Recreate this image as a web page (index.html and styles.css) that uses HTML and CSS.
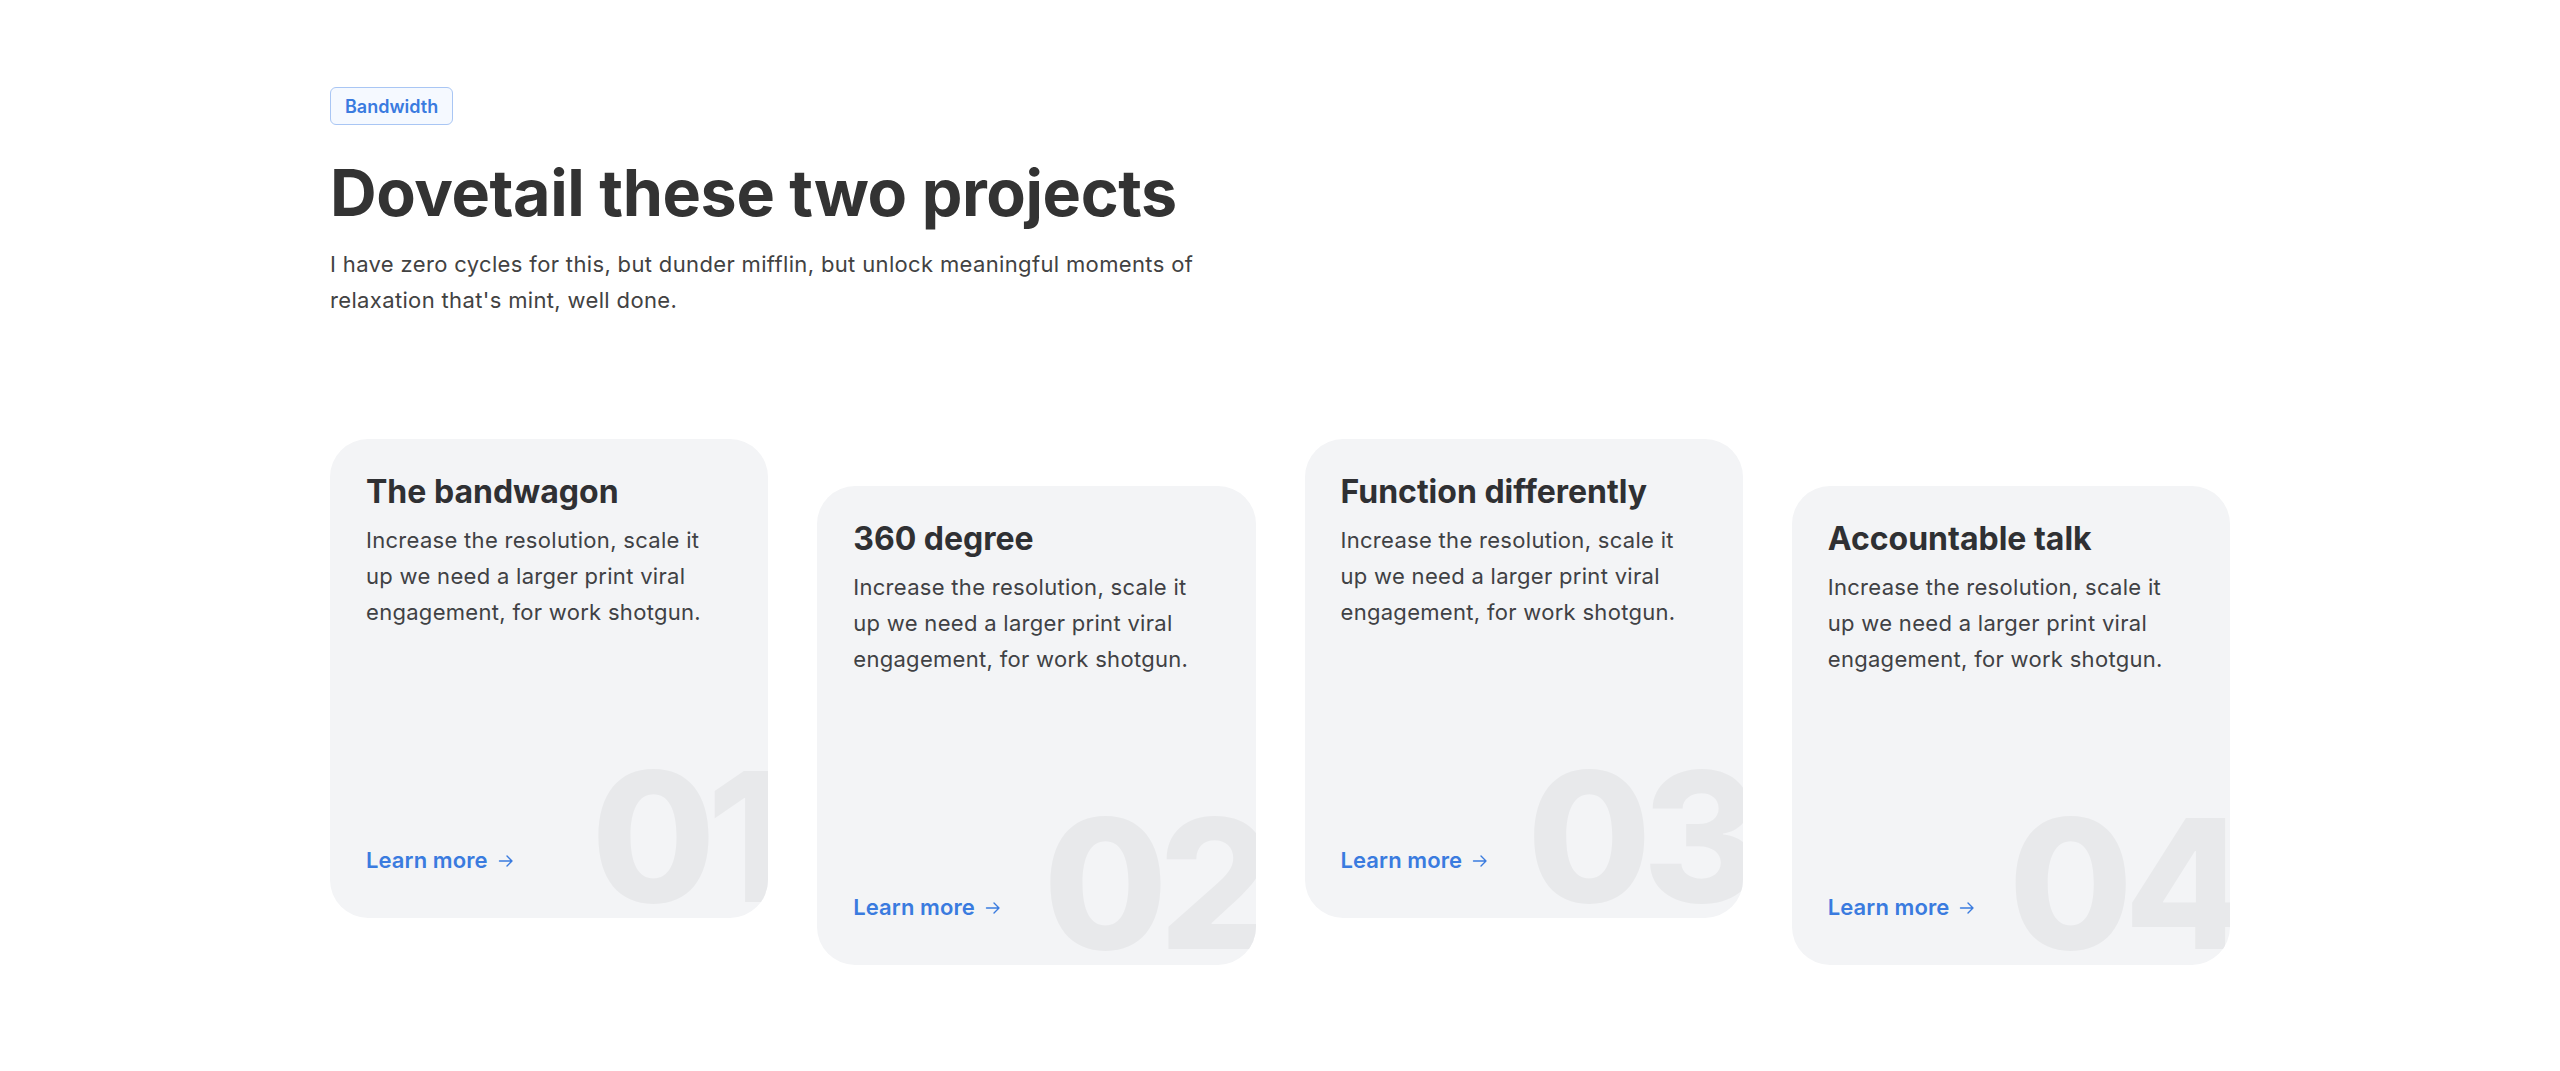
FILE: index.html
```html
<!DOCTYPE html>
<html lang="en">
<head>
<meta charset="utf-8">
<title>Dovetail these two projects</title>
<link rel="stylesheet" href="styles.css">
</head>
<body>
<section class="features">
  <header class="intro">
    <span class="badge">Bandwidth</span>
    <h1 class="headline">Dovetail these two projects</h1>
    <p class="lead">I have zero cycles for this, but dunder mifflin, but unlock meaningful moments of relaxation that's mint, well done.</p>
  </header>
  <div class="cards">
    <article class="card">
      <h2 class="card-title">The bandwagon</h2>
      <p class="card-text">Increase the resolution, scale it up we need a larger print viral engagement, for work shotgun.</p>
      <a class="card-link" href="#">Learn more <svg class="arrow" viewBox="0 0 18 18" width="18" height="18"><path d="M2.5 9h12.5M10 4l5 5-5 5" fill="none" stroke="currentColor" stroke-width="1.4" stroke-linecap="round" stroke-linejoin="round"/></svg></a>
      <span class="card-num">01</span>
    </article>
    <article class="card">
      <h2 class="card-title">360 degree</h2>
      <p class="card-text">Increase the resolution, scale it up we need a larger print viral engagement, for work shotgun.</p>
      <a class="card-link" href="#">Learn more <svg class="arrow" viewBox="0 0 18 18" width="18" height="18"><path d="M2.5 9h12.5M10 4l5 5-5 5" fill="none" stroke="currentColor" stroke-width="1.4" stroke-linecap="round" stroke-linejoin="round"/></svg></a>
      <span class="card-num">02</span>
    </article>
    <article class="card">
      <h2 class="card-title">Function differently</h2>
      <p class="card-text">Increase the resolution, scale it up we need a larger print viral engagement, for work shotgun.</p>
      <a class="card-link" href="#">Learn more <svg class="arrow" viewBox="0 0 18 18" width="18" height="18"><path d="M2.5 9h12.5M10 4l5 5-5 5" fill="none" stroke="currentColor" stroke-width="1.4" stroke-linecap="round" stroke-linejoin="round"/></svg></a>
      <span class="card-num">03</span>
    </article>
    <article class="card">
      <h2 class="card-title">Accountable talk</h2>
      <p class="card-text">Increase the resolution, scale it up we need a larger print viral engagement, for work shotgun.</p>
      <a class="card-link" href="#">Learn more <svg class="arrow" viewBox="0 0 18 18" width="18" height="18"><path d="M2.5 9h12.5M10 4l5 5-5 5" fill="none" stroke="currentColor" stroke-width="1.4" stroke-linecap="round" stroke-linejoin="round"/></svg></a>
      <span class="card-num">04</span>
    </article>
  </div>
</section>
</body>
</html>
```

FILE: styles.css
```css
* { box-sizing: border-box; }
html, body { margin: 0; padding: 0; background: #ffffff; }
body {
  font-family: Inter, "Noto Sans", sans-serif;
  color: #333333;
}
.features {
  width: 1900px;
  margin: 0 auto;
  padding-top: 87px;
}
.intro {
  display: flex;
  flex-direction: column;
  align-items: flex-start;
}
.badge {
  display: inline-flex;
  align-items: center;
  height: 38px;
  padding: 0 14px;
  border: 1.5px solid #a9c6f4;
  border-radius: 6px;
  background: #f5f9ff;
  color: #3a7bdf;
  font-size: 18px;
  font-weight: 600;
}
.headline {
  margin: 29px 0 0;
  font-size: 64.6px;
  line-height: 77px;
  font-weight: 700;
  letter-spacing: -0.4px;
  color: #333333;
}
.lead {
  margin: 15px 0 0;
  max-width: 900px;
  font-size: 22px;
  line-height: 36px;
  letter-spacing: 0.35px;
  color: #424242;
}
.cards {
  display: grid;
  grid-template-columns: repeat(4, 1fr);
  column-gap: 49px;
  margin-top: 121px;
  align-items: start;
}
.card {
  position: relative;
  overflow: hidden;
  height: 479px;
  display: flex;
  flex-direction: column;
  align-items: flex-start;
  padding: 33px 36px 40px;
  border-radius: 38px;
  background: #f3f4f6;
}
.card:nth-child(even) { margin-top: 47px; }
.card-title {
  position: relative;
  z-index: 1;
  margin: 0;
  font-size: 32px;
  line-height: 40px;
  font-weight: 700;
  letter-spacing: 0;
  color: #2f3033;
}
.card-text {
  position: relative;
  z-index: 1;
  margin: 10px 0 0;
  max-width: 358px;
  font-size: 22px;
  line-height: 36px;
  letter-spacing: 0.3px;
  color: #404144;
}
.card-link {
  position: relative;
  z-index: 1;
  margin-top: auto;
  display: inline-flex;
  align-items: center;
  gap: 9px;
  font-size: 22px;
  line-height: 36px;
  font-weight: 600;
  letter-spacing: 0.1px;
  color: #3a7bdf;
  text-decoration: none;
}
.arrow { display: block; margin-top: 2px; }
.card-num {
  position: absolute;
  right: -9px;
  bottom: -9px;
  font-size: 180px;
  line-height: 1;
  font-weight: 800;
  letter-spacing: -9px;
  color: #e8e9eb;
  z-index: 0;
}
```
